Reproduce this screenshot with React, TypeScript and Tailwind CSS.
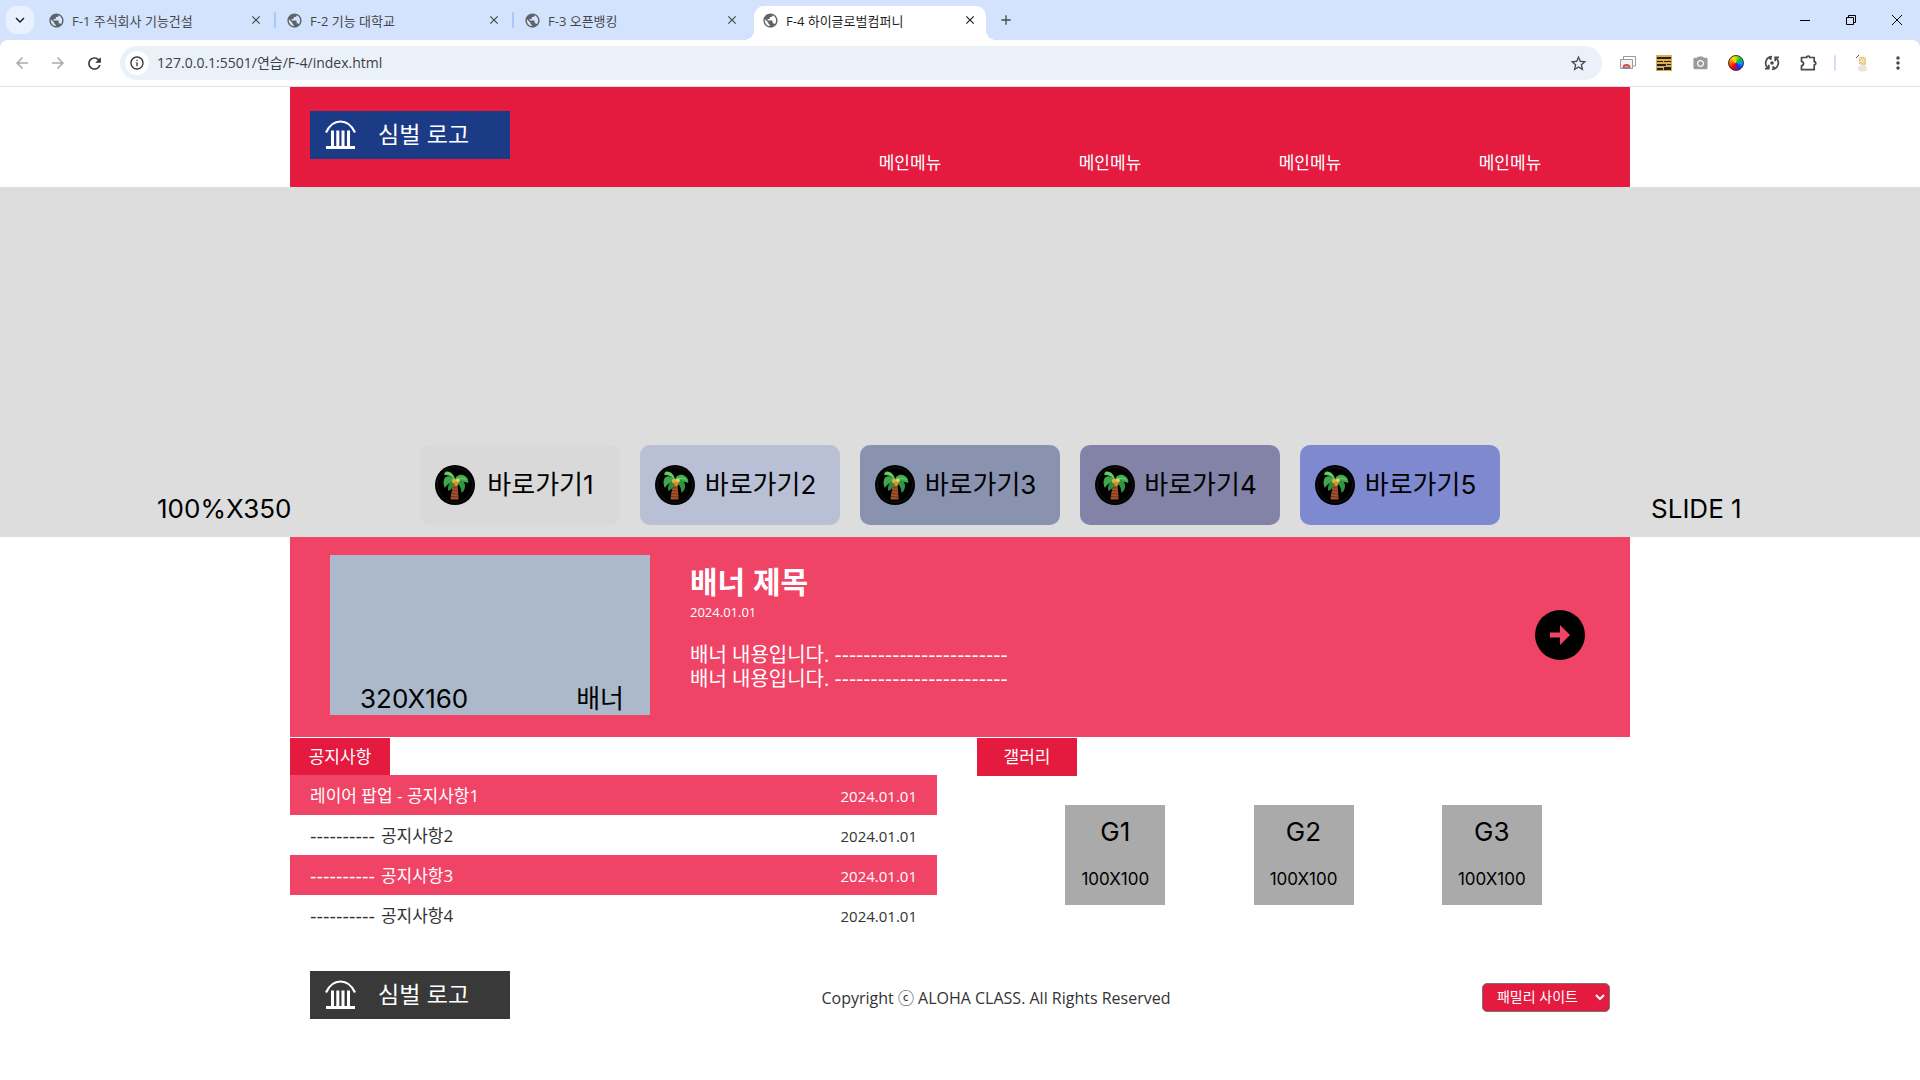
import React from 'react';
import {
  MdAdd,
  MdArrowBack,
  MdArrowForward,
  MdCameraAlt,
  MdClose,
  MdInfoOutline,
  MdKeyboardArrowDown,
  MdMoreVert,
  MdPublic,
  MdRefresh,
  MdStarBorder,
} from 'react-icons/md';

const tabs = ['F-1 주식회사 기능건설', 'F-2 기능 대학교', 'F-3 오픈뱅킹', 'F-4 하이글로벌컴퍼니'];
const activeTab = 3;

const menus = ['메인메뉴', '메인메뉴', '메인메뉴', '메인메뉴'];

const shortcuts = [
  { label: '바로가기1', color: 'bg-[#d9d9d9]' },
  { label: '바로가기2', color: 'bg-[#b9bfd4]' },
  { label: '바로가기3', color: 'bg-[#8993b0]' },
  { label: '바로가기4', color: 'bg-[#8383a8]' },
  { label: '바로가기5', color: 'bg-[#7e89cf]' },
];

const notices = [
  { dashes: '', title: '레이어 팝업 - 공지사항1', date: '2024.01.01' },
  { dashes: '----------', title: '공지사항2', date: '2024.01.01' },
  { dashes: '----------', title: '공지사항3', date: '2024.01.01' },
  { dashes: '----------', title: '공지사항4', date: '2024.01.01' },
];

const gallery = ['G1', 'G2', 'G3'];

const PalmIcon = () => (
  <svg width="40" height="40" viewBox="0 0 40 40" aria-hidden="true" className="shrink-0">
    <circle cx="20" cy="20" r="20" fill="#000" />
    <circle cx="20" cy="20" r="17.5" fill="none" stroke="#2b2b1c" strokeWidth="0.5" />
    <path d="M18.500 18c-1 5-2.500 11-3 16.500h8c0-5-.5-11-1.500-16.500z" fill="#a5532a" />
    <path d="M17.500 22.500l5 .6M16.800 25.500l6 .6M16.300 28.500l6.800.6M15.900 31.500l7.500.6" stroke="#6b3016" strokeWidth="0.900" />
    <path d="M20 15.500c0-5-4-9.500-8.500-9-2 .5-2.500 2-2 3.500 4.500-.5 8 2 10.500 5.500z" fill="#5fc45f" />
    <path d="M20 15.500c-3-5-9-5.500-10.800-1.500C8 17 8.500 20.500 10 23c1.500-3.500 5.500-5.500 10-7.500z" fill="#3fa64b" />
    <path d="M20 15.500c-4.500 0-8 4.500-6.800 10.500 3.500-1.500 7-5 6.800-10.500z" fill="#2e8b3c" />
    <path d="M20 15.500c0-5 6-7.500 10-4.500 3 2 3.500 4.500 3.200 7-4-2-8-1.500-13.200-2.500z" fill="#3fae50" />
    <path d="M20.500 15.500c5-2 10 1 9.500 6 0 2.500-1.500 5-3.500 6.500 0-5-2.500-9-6-12.500z" fill="#2f9442" />
    <path d="M12 8c4 1 6.500 3.500 8 7.500M21 15c4-2.500 8-2 10.500 0" fill="none" stroke="#8ad97c" strokeWidth="0.700" />
    <circle cx="19" cy="16" r="2.200" fill="#dfb43c" />
    <circle cx="22.800" cy="15.500" r="2" fill="#f0cd5b" />
    <circle cx="21.300" cy="18.800" r="2.200" fill="#c9982a" />
  </svg>
);

const Logo = ({ className }: { className: string }) => (
  <a href="#" className={`flex h-12 w-[200px] items-center gap-[22px] pl-[15px] ${className}`}>
    <svg width="31" height="30" viewBox="0 0 31 30" fill="none" stroke="currentColor" aria-hidden="true">
      <path d="M1 12.500C4 6 9 1.500 15.500 1.500S27 6 30 12.500" strokeWidth="2.200" />
      <path d="M7.500 10.500V26M12.800 10.500V26M18 10.500V26M23.500 10.500V26" strokeWidth="3" />
      <path d="M1 27.500h29" strokeWidth="3" />
    </svg>
    <span className="font-['Inter','Noto_Sans_CJK_KR',sans-serif] text-[23px] leading-7">심벌 로고</span>
  </a>
);

const TabStrip = () => (
  <div className="flex h-10 items-stretch bg-[#d3e3fd] text-[#474747]">
    <div className="flex w-10 items-center pl-1.5">
      <button aria-label="탭 검색" className="flex size-7 items-center justify-center rounded-[10px] bg-[#e9f1fe] text-[#1f1f1f]">
        <MdKeyboardArrowDown size={18} />
      </button>
    </div>
    {tabs.map((tab, i) => {
      const active = i === activeTab;
      return (
        <div key={tab} className="flex w-[238px] items-stretch">
          <div
            className={`relative mt-1.5 flex w-[232px] items-center pb-1.5 pl-2 pr-[9px] ${
              active ? 'rounded-t-[10px] bg-white text-[#1f1f1f]' : ''
            }`}
          >
            {active && (
              <>
                <span className="absolute -left-2.5 bottom-0 size-2.5 bg-[radial-gradient(circle_at_0_0,transparent_10px,#fff_10px)]" />
                <span className="absolute -right-2.5 bottom-0 size-2.5 bg-[radial-gradient(circle_at_100%_0,transparent_10px,#fff_10px)]" />
              </>
            )}
            <MdPublic size={17} className="text-[#5f6368]" />
            <span className="ml-[7px] flex-1 truncate pt-[2px] text-[13px] leading-5">{tab}</span>
            <button aria-label="탭 닫기">
              <MdClose size={14} />
            </button>
          </div>
          {i < activeTab - 1 && <span className="ml-[2px] h-4 w-[2px] self-center rounded-full bg-[#a8c7fa]" />}
        </div>
      );
    })}
    <button aria-label="새 탭" className="ml-[2px] flex w-6 items-center justify-center">
      <MdAdd size={16} />
    </button>
    <div className="ml-auto flex items-center text-black">
      <button aria-label="최소화" className="flex w-[46px] justify-center">
        <svg width="10" height="10" viewBox="0 0 10 10" stroke="currentColor"><path d="M0 5.500h10" /></svg>
      </button>
      <button aria-label="이전 크기로" className="flex w-[46px] justify-center">
        <svg width="10" height="10" viewBox="0 0 10 10" fill="none" stroke="currentColor">
          <path d="M.5 2.500h7v7h-7zM2.500 2.500v-2h7v7h-2" />
        </svg>
      </button>
      <button aria-label="닫기" className="flex w-[46px] justify-center">
        <svg width="10" height="10" viewBox="0 0 10 10" stroke="currentColor"><path d="M0 0l10 10M10 0L0 10" /></svg>
      </button>
    </div>
  </div>
);

const Extensions = () => (
  <>
    <button aria-label="캡처" className="flex w-9 justify-center">
      <svg width="16" height="16" viewBox="0 0 16 16" fill="none">
        <path d="M3.500 4V1.500h12V11H13" stroke="#9a9a9a" />
        <path d="M.5 4.500h12v9H.5z" fill="#f4f4f4" stroke="#9a9a9a" />
        <path d="M3.500 13a3 3 0 0 1 6 0" stroke="#e94235" strokeWidth="2" />
        <path d="M4.500 13.500a2 2 0 0 1 4 0z" fill="#4285f4" />
      </svg>
    </button>
    <button aria-label="격자" className="flex w-9 justify-center">
      <svg width="16" height="16" viewBox="0 0 16 16">
        <path d="M0 0h16v16H0z" fill="#e0ac4e" />
        <path d="M1 2h14v2H1zM1 6h6v1H1zM8 6h7v1H8zM1 9h9v2H1zM11 9h4v1h-4zM1 13h6v2H1zM8 12h7v3H8z" fill="#222" />
      </svg>
    </button>
    <button aria-label="카메라" className="flex w-9 justify-center text-[#9a9a9a]">
      <MdCameraAlt size={17} />
    </button>
    <button aria-label="색상 선택" className="flex w-9 justify-center">
      <span className="size-4 rounded-full border border-[#333] bg-[conic-gradient(#b5e000,#00c030_50deg,#00a0ff_90deg,#1030ff_140deg,#c00060_190deg,#ff0000_220deg,#ff7000_280deg,#ffe000_330deg,#b5e000)]" />
    </button>
    <button aria-label="동기화" className="flex w-9 justify-center text-[#474747]">
      <svg width="16" height="16" viewBox="0 0 16 16" fill="none" stroke="currentColor" strokeWidth="1.700">
        <path d="M8 1.700A6.300 6.300 0 0 0 3.700 12.600M1 13.600h3.800V9.800M8 14.300A6.300 6.300 0 0 0 12.300 3.400M15 2.400h-3.800v3.800M5 2.500l2.500 2M8.500 11.500l2.500 2" />
        <circle cx="8" cy="8" r="1.800" fill="currentColor" stroke="none" />
      </svg>
    </button>
    <button aria-label="확장 프로그램" className="flex w-9 justify-center text-[#474747]">
      <svg width="18" height="18" viewBox="0 0 18 18" fill="none" stroke="currentColor" strokeWidth="1.700" strokeLinejoin="round">
        <path d="M2.500 3.500h5.200a1.500 1.500 0 0 1 3 0h4.500v4.200a1.600 1.600 0 0 1 0 3.200v4.800H2.500v-4.200a2 2 0 0 0 0-4z" />
      </svg>
    </button>
  </>
);

const Toolbar = () => (
  <div className="bg-[#d3e3fd]">
    <div className="flex h-[47px] items-center rounded-t-lg border-b border-[#dfe1e5] bg-white pl-1 pr-1">
      <button aria-label="뒤로" className="flex w-9 justify-center text-[#a9a9a9]">
        <MdArrowBack size={18} />
      </button>
      <button aria-label="앞으로" className="flex w-9 justify-center text-[#a9a9a9]">
        <MdArrowForward size={18} />
      </button>
      <button aria-label="새로고침" className="flex w-9 justify-center text-[#333]">
        <MdRefresh size={19} />
      </button>
      <div className="ml-2 flex h-[34px] flex-1 items-center rounded-full bg-[#ebf1f9] pl-[5px] pr-[14px]">
        <span className="flex size-6 items-center justify-center rounded-full bg-white text-[#333]">
          <MdInfoOutline size={16} />
        </span>
        <input
          aria-label="주소창"
          defaultValue="127.0.0.1:5501/연습/F-4/index.html"
          className="ml-2 min-w-0 flex-1 bg-transparent text-sm text-[#3c4043] outline-none"
        />
        <button aria-label="북마크" className="text-[#474747]">
          <MdStarBorder size={19} />
        </button>
      </div>
      <div className="ml-2 flex items-center">
        <Extensions />
        <span className="mx-2 h-4 w-[2px] rounded-full bg-[#cfe0fb]" />
        <button aria-label="프로필" className="flex w-9 justify-center">
          <svg width="18" height="18" viewBox="0 0 18 18">
            <path d="M5 16c0-4 2-5.500 4.500-5.500S14 12 14 16l-2 1.500H7z" fill="#ece3df" />
            <path d="M6 10V6a3.500 3.500 0 0 1 7 0v5h-2l-3-.5z" fill="#e9cf86" />
            <circle cx="9.500" cy="7" r="2" fill="#f6dccb" />
            <path d="M3 4l3-3" stroke="#555" />
          </svg>
        </button>
        <button aria-label="메뉴" className="flex w-9 justify-center text-[#474747]">
          <MdMoreVert size={20} />
        </button>
      </div>
    </div>
  </div>
);

const SiteHeader = () => (
  <header className="mx-auto flex h-[100px] w-full max-w-[1340px] justify-between bg-[#e41a3f] px-5 pt-6 text-white">
    <Logo className="bg-[#1c3b87]" />
    <nav className="flex self-end pb-3">
      {menus.map((menu, i) => (
        <a key={i} href="#" className="w-[200px] text-center text-[17px] leading-6">
          {menu}
        </a>
      ))}
    </nav>
  </header>
);

const Slide = () => (
  <section className="flex h-[350px] items-end justify-between bg-[#ddd] px-[157px] pb-3 font-['Inter','Noto_Sans_CJK_KR',sans-serif] text-[26px] leading-8 text-black">
    <p className="w-[180px]">100%X350</p>
    <div className="flex gap-5">
      {shortcuts.map(({ label, color }) => (
        <a key={label} href="#" className={`flex h-20 w-[200px] items-center rounded-[10px] pl-[15px] pr-[14px] ${color}`}>
          <PalmIcon />
          <span className="flex-1 text-center">{label}</span>
        </a>
      ))}
    </div>
    <p className="w-[180px] pl-[68px]">SLIDE 1</p>
  </section>
);

const Banner = () => (
  <section className="mx-auto flex h-[200px] w-full max-w-[1340px] items-start bg-[#f04466] px-10 pt-[18px] text-white">
    <div className="flex h-40 w-80 items-end justify-between bg-[#abb9cb] pl-[30px] pr-[26px] font-['Inter','Noto_Sans_CJK_KR',sans-serif] text-[26px] leading-8 text-black">
      <span>320X160</span>
      <span>배너</span>
    </div>
    <div className="ml-10 flex-1 pt-[7px]">
      <h2 className="text-3xl font-bold leading-10">배너 제목</h2>
      <p className="text-[13px] leading-5">2024.01.01</p>
      <div className="mt-[21px] text-xl leading-6">
        {[1, 2].map(line => (
          <p key={line}>
            배너 내용입니다. <span className="font-['DejaVu_Sans',sans-serif]">------------------------</span>
          </p>
        ))}
      </div>
    </div>
    <button aria-label="바로가기" className="mr-[5px] mt-[55px]">
      <svg width="50" height="50" viewBox="0 0 50 50">
        <circle cx="25" cy="25" r="25" fill="#000" />
        <path d="M15 22.500h10V15l10 10-10 10v-7.500H15z" fill="#f04466" />
      </svg>
    </button>
  </section>
);

const Notice = () => (
  <section>
    <h3 className="h-[37px] w-[100px] bg-[#e41a3f] text-center text-[17px] leading-[37px] text-white">공지사항</h3>
    <ul>
      {notices.map(({ dashes, title, date }) => (
        <li key={title} className="odd:bg-[#f04466] odd:text-white">
          <a href="#" className="flex h-10 items-center justify-between px-5 pt-[2px] text-[17px] leading-6">
            <span>
              {dashes && <span className="mr-1.5 font-['DejaVu_Sans',sans-serif] text-lg leading-6">{dashes}</span>}
              {title}
            </span>
            <span className="text-[15px]">{date}</span>
          </a>
        </li>
      ))}
    </ul>
  </section>
);

const Gallery = () => (
  <section>
    <h3 className="h-[38px] w-[100px] bg-[#e41a3f] text-center text-[17px] leading-[37px] text-white">갤러리</h3>
    <div className="mt-[29px] flex justify-evenly">
      {gallery.map(name => (
        <a
          key={name}
          href="#"
          className="flex size-[100px] flex-col items-center justify-between bg-[#aaa] pb-[14px] pt-[11px] font-['Inter',sans-serif] text-black"
        >
          <span className="text-[26px] leading-8">{name}</span>
          <span className="text-[17px] leading-6">100X100</span>
        </a>
      ))}
    </div>
  </section>
);

const SiteFooter = () => (
  <footer className="mx-auto flex h-[120px] w-full max-w-[1340px] items-center justify-between px-5">
    <Logo className="bg-[#393939] text-white" />
    <p className="pt-1.5 text-base">Copyright ⓒ ALOHA CLASS. All Rights Reserved</p>
    <div className="relative mt-1">
      <select
        aria-label="패밀리 사이트"
        className="block h-[29px] w-32 appearance-none rounded-[5px] border border-[#767676] bg-[#e41a3f] pl-[14px] text-sm leading-5 text-white"
      >
        <option>패밀리 사이트</option>
      </select>
      <svg width="10" height="7" viewBox="0 0 10 7" fill="none" stroke="#fff" strokeWidth="2" className="pointer-events-none absolute right-[5px] top-[11px]">
        <path d="M1 1l4 4 4-4" />
      </svg>
    </div>
  </footer>
);

export default function App() {
  return (
    <div className="min-h-screen bg-white font-['Open_Sans','Noto_Sans_CJK_KR',sans-serif] text-[#333]">
      <TabStrip />
      <Toolbar />
      <SiteHeader />
      <Slide />
      <Banner />
      <main className="mx-auto mt-px grid w-full max-w-[1340px] grid-cols-[647fr_653fr] gap-10">
        <Notice />
        <Gallery />
      </main>
      <SiteFooter />
    </div>
  );
}
